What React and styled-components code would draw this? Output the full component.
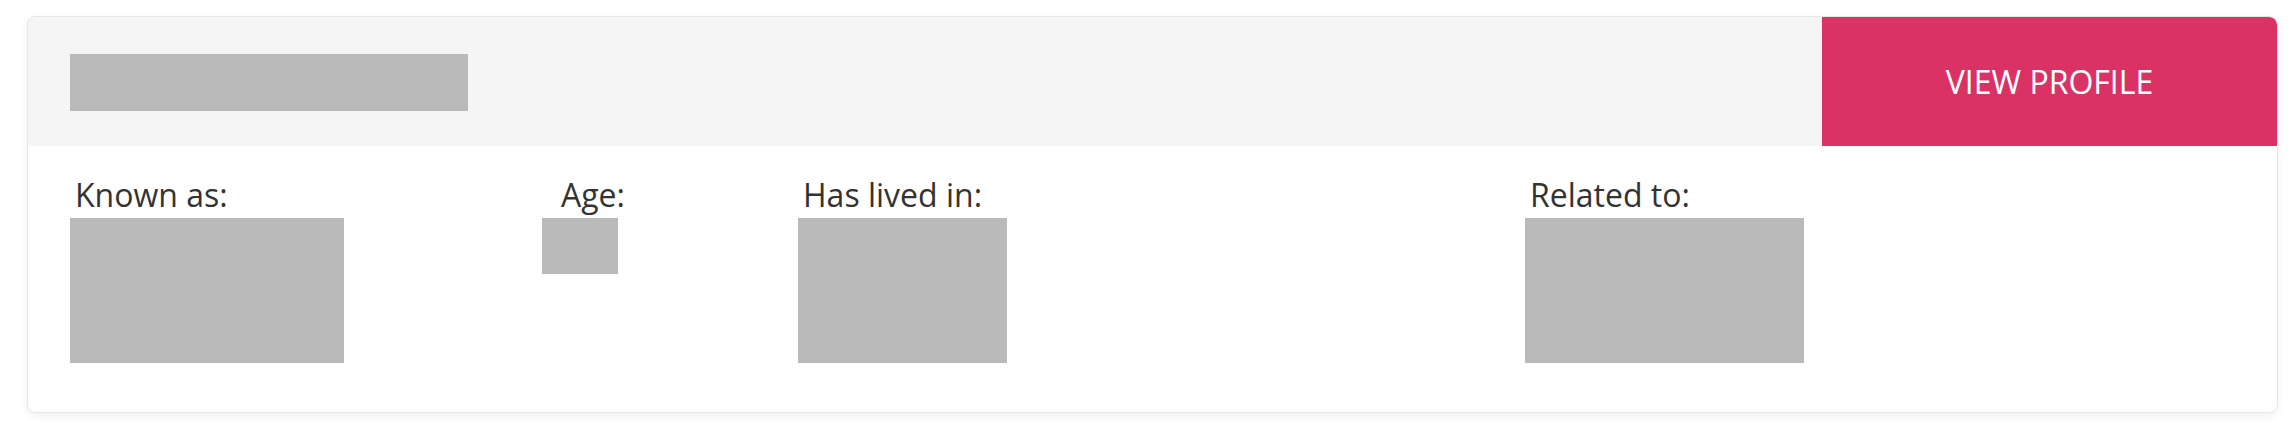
import React from 'react';
import styled, { createGlobalStyle } from 'styled-components';

const GlobalStyle = createGlobalStyle`
  html, body {
    margin: 0;
    padding: 0;
    background: #fff;
  }
  body {
    font-family: 'Open Sans', 'Liberation Sans', sans-serif;
    color: #333;
  }
`;

// Data for the detail columns (values are hidden behind grey blocks)
const columns = [
  { label: 'Known as:', width: 274, height: 145 },
  { label: 'Age:', width: 76, height: 56, indent: 19 },
  { label: 'Has lived in:', width: 209, height: 145 },
  { label: 'Related to:', width: 279, height: 145 },
];

const App = () => (
  <Page>
    <GlobalStyle />
    <Card>
      <Header>
        <NameBlock />
        <ViewButton>VIEW PROFILE</ViewButton>
      </Header>
      <Details>
        {columns.map(col => (
          <Column key={col.label}>
            <Label indent={col.indent}>{col.label}</Label>
            <Redacted style={{ width: col.width, height: col.height }} />
          </Column>
        ))}
      </Details>
    </Card>
  </Page>
);

const Page = styled.div`
  padding: 16px 18px 25px 27px;
`;

const Card = styled.div`
  border: 1px solid #e6e6e6;
  border-radius: 8px;
  background: #fff;
  box-shadow: 0 3px 8px rgba(0, 0, 0, 0.06);
  overflow: hidden;
`;

const Header = styled.div`
  display: flex;
  align-items: stretch;
  justify-content: space-between;
  height: 129px;
  background: #f5f5f5;
`;

const NameBlock = styled.div`
  align-self: center;
  width: 398px;
  height: 57px;
  margin: 2px 0 0 42px;
  background: #bababa;
`;

const ViewButton = styled.button`
  width: 455px;
  border: none;
  border-top-right-radius: 8px;
  background: #db3266;
  color: #fff;
  font-family: 'Open Sans', 'Liberation Sans', sans-serif;
  font-size: 32px;
  cursor: pointer;
  padding: 0;
`;

const Details = styled.div`
  display: grid;
  grid-template-columns: 472px 256px 727px 1fr;
  padding: 28px 42px 49px;
  align-items: start;
`;

const Column = styled.div`
  display: flex;
  flex-direction: column;
  align-items: flex-start;
`;

const Label = styled.div`
  font-size: 32px;
  line-height: 42px;
  color: #333;
  padding-left: ${props => props.indent || 5}px;
  margin-bottom: 2px;
`;

const Redacted = styled.div`
  background: #bababa;
`;

export default App;
